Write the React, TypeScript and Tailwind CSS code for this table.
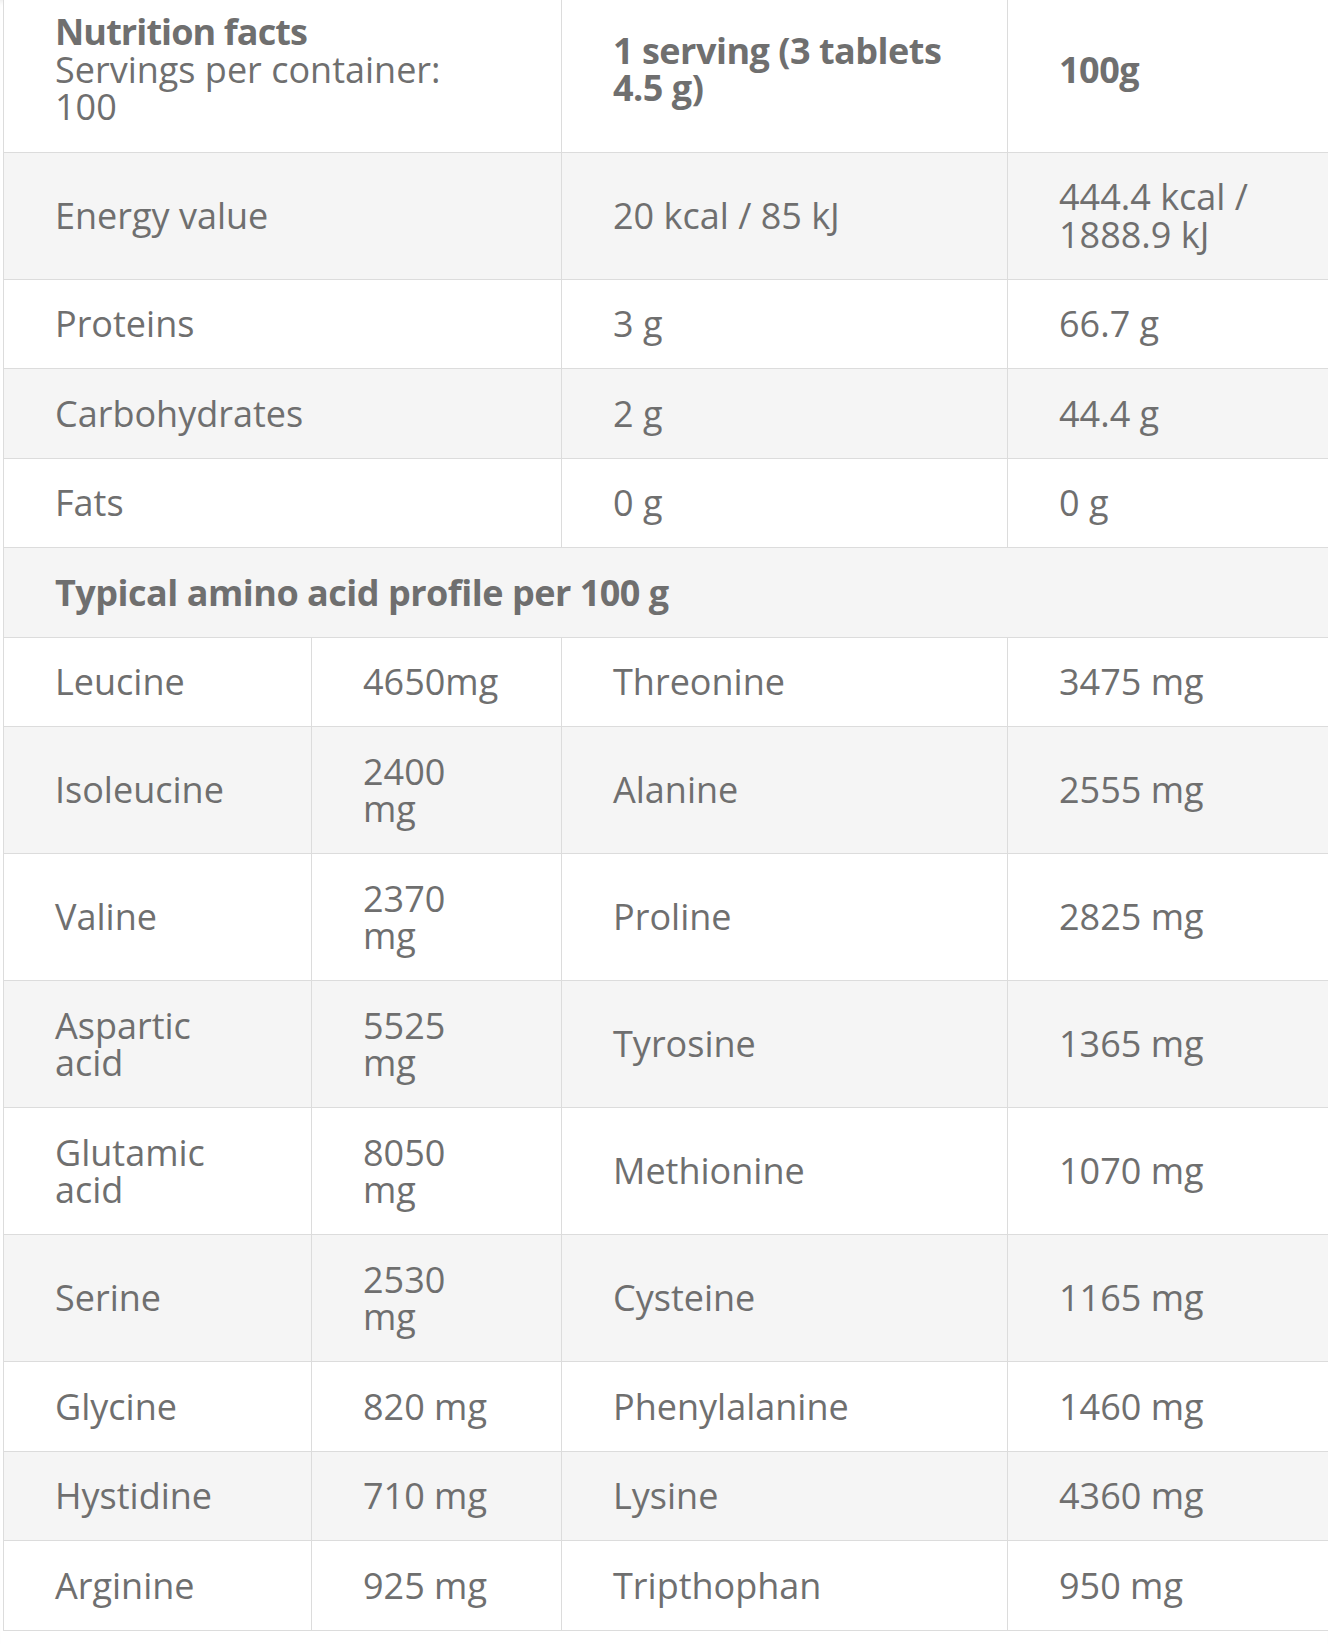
import React from 'react';

const basics = [
  { name: 'Energy value', serving: '20 kcal / 85 kJ', per100: '444.4 kcal /\n1888.9 kJ' },
  { name: 'Proteins', serving: '3 g', per100: '66.7 g' },
  { name: 'Carbohydrates', serving: '2 g', per100: '44.4 g' },
  { name: 'Fats', serving: '0 g', per100: '0 g' },
];

const aminos = [
  ['Leucine', '4650mg', 'Threonine', '3475 mg'],
  ['Isoleucine', '2400\nmg', 'Alanine', '2555 mg'],
  ['Valine', '2370\nmg', 'Proline', '2825 mg'],
  ['Aspartic\nacid', '5525\nmg', 'Tyrosine', '1365 mg'],
  ['Glutamic\nacid', '8050\nmg', 'Methionine', '1070 mg'],
  ['Serine', '2530\nmg', 'Cysteine', '1165 mg'],
  ['Glycine', '820 mg', 'Phenylalanine', '1460 mg'],
  ['Hystidine', '710 mg', 'Lysine', '4360 mg'],
  ['Arginine', '925 mg', 'Tripthophan', '950 mg'],
];

const cell = 'border border-[#dcdcdc] pl-[51px] pr-[30px] py-[25.5px] align-middle whitespace-pre-line';
const head = 'border border-[#dcdcdc] border-t-0 pl-[51px] pr-[30px] pt-[13px] pb-[26px] align-middle';

export default function App() {
  return (
    <div className="w-[1328px] h-[1644px] overflow-hidden bg-white pl-[3px] shadow-[inset_0_5px_5px_-3px_rgba(0,0,0,0.07)]">
      <table
        className="table-fixed border-collapse w-[1360px] text-left text-[#6f6f6f] text-[36px] leading-[37.5px]"
        style={{ fontFamily: '"Open Sans", Lato, sans-serif' }}
      >
        <colgroup>
          <col className="w-[308px]" />
          <col className="w-[250px]" />
          <col className="w-[446px]" />
          <col className="w-[356px]" />
        </colgroup>
        <tbody>
          {/* header */}
          <tr className="bg-white">
            <th colSpan={2} className={head + ' font-normal'}>
              <span className="block font-bold tracking-[-0.9px]">Nutrition facts</span>
              <span className="block">Servings per container:</span>
              <span className="block">100</span>
            </th>
            <th className={head + ' font-bold tracking-[-0.5px] whitespace-pre-line'}>
              {'1 serving (3 tablets\n4.5 g)'}
            </th>
            <th className={head + ' font-bold tracking-[-0.5px]'}>100g</th>
          </tr>

          {basics.map((row, i) => (
            <tr key={row.name} className={i % 2 === 0 ? 'bg-[#f5f5f5]' : 'bg-white'}>
              <td colSpan={2} className={cell}>{row.name}</td>
              <td className={cell}>{row.serving}</td>
              <td className={cell}>{row.per100}</td>
            </tr>
          ))}

          <tr className="bg-[#f5f5f5]">
            <td colSpan={4} className={cell + ' font-bold tracking-[-0.5px]'}>Typical amino acid profile per 100 g</td>
          </tr>

          {aminos.map((row, i) => (
            <tr key={row[0]} className={i % 2 === 0 ? 'bg-white' : 'bg-[#f5f5f5]'}>
              {row.map((v, j) => (
                <td key={j} className={cell}>{v}</td>
              ))}
            </tr>
          ))}
        </tbody>
      </table>
    </div>
  );
}
